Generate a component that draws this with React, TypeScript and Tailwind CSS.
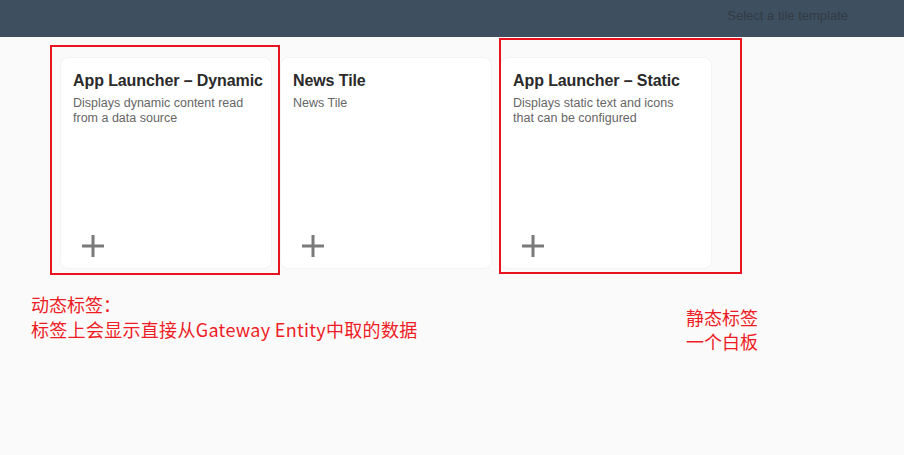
import React from "react";

const tiles = [
  {
    title: "App Launcher – Dynamic",
    desc: "Displays dynamic content read from a data source",
  },
  { title: "News Tile", desc: "News Tile" },
  {
    title: "App Launcher – Static",
    desc: "Displays static text and icons that can be configured",
  },
];

function PlusIcon() {
  return (
    <svg width="22" height="22" viewBox="0 0 22 22" className="block">
      <rect x="9.5" y="0" width="3" height="22" fill="#7a7a7a" />
      <rect x="0" y="9.5" width="22" height="3" fill="#7a7a7a" />
    </svg>
  );
}

function Tile({ title, desc }: { title: string; desc: string }) {
  return (
    <div className="w-[210px] h-[210px] bg-white rounded-[7px] shadow-[0_0_0_1px_#f4f4f4] flex flex-col justify-between pl-3 pr-1 pt-[13px] pb-[11px]">
      <div>
        <h3 className="text-[16px] leading-[20px] font-bold text-[#2a2a2a] whitespace-nowrap tracking-[-0.1px]">
          {title}
        </h3>
        <p className="mt-[5px] text-[12.5px] leading-[15px] text-[#666666] pr-4">
          {desc}
        </p>
      </div>
      <div className="pl-[9px]">
        <PlusIcon />
      </div>
    </div>
  );
}

const cjk = '"Noto Sans CJK SC", "Noto Sans", sans-serif';

export default function App() {
  return (
    <div
      className="relative w-[904px] h-[455px] bg-[#fafafa] overflow-hidden"
      style={{ fontFamily: '"Liberation Sans", Arial, sans-serif' }}
    >
      {/* Header */}
      <header className="h-[37px] bg-[#3e4f60] flex items-start justify-end pr-[56px] pt-[8px]">
        <span className="text-[13px] leading-[16px] text-[#333b44]">Select a tile template</span>
      </header>

      {/* Tiles */}
      <div className="flex gap-[10px] pl-[61px] pt-[21px]">
        {tiles.map((t) => (
          <Tile key={t.title} title={t.title} desc={t.desc} />
        ))}
      </div>

      {/* Annotations */}
      <div className="absolute left-[50px] top-[45px] w-[230px] h-[230px] border-2 border-[#e8141f]" />
      <div className="absolute left-[499px] top-[38px] w-[243px] h-[236px] border-2 border-[#e8141f]" />

      <div
        className="absolute left-[31px] top-[292px] text-[18px] leading-[25px] text-[#ee1c25]"
        style={{ fontFamily: cjk }}
      >
        <div>动态标签：</div>
        <div className="tracking-[0.3px]">标签上会显示直接从Gateway Entity中取的数据</div>
      </div>
      <div
        className="absolute left-[686px] top-[305px] text-[18px] leading-[24px] text-[#ee1c25]"
        style={{ fontFamily: cjk }}
      >
        <div>静态标签</div>
        <div>一个白板</div>
      </div>
    </div>
  );
}
